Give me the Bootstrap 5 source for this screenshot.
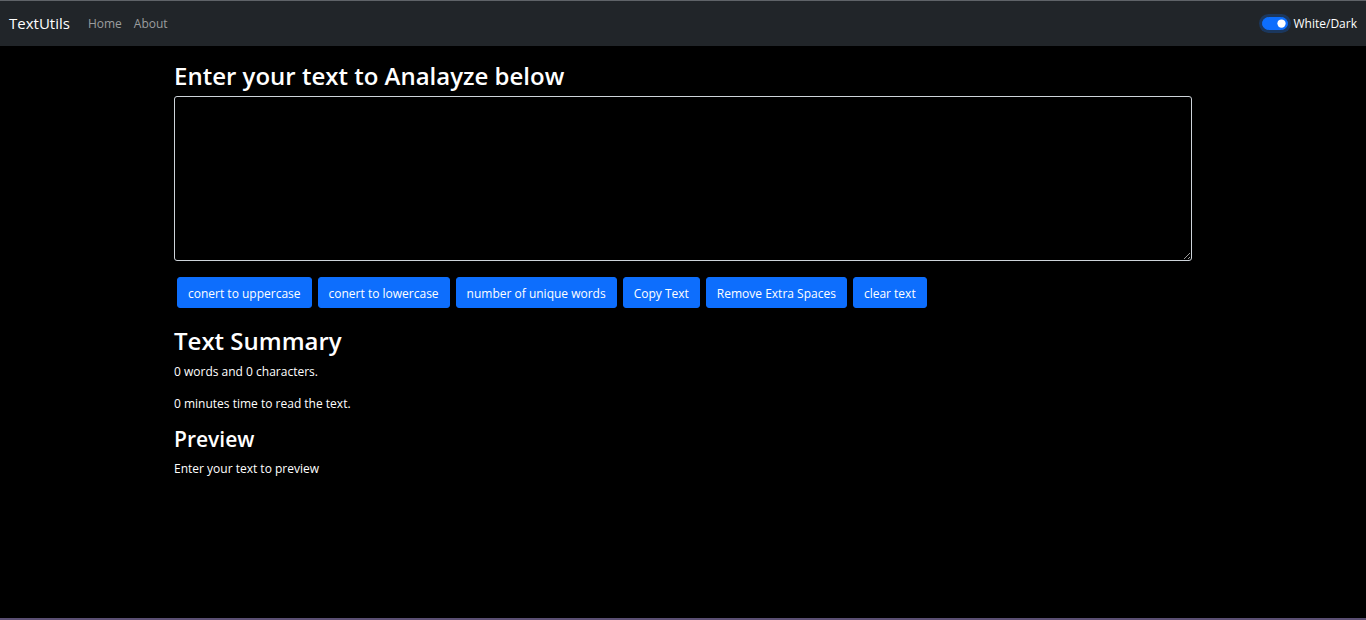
<!DOCTYPE html>
<html lang="en">
<head>
<meta charset="utf-8">
<meta name="viewport" content="width=device-width, initial-scale=1">
<title>TextUtils</title>
<link href="https://cdn.jsdelivr.net/npm/bootstrap@5.3.0/dist/css/bootstrap.min.css" rel="stylesheet">
<style>
  body { font-family: "Open Sans", "Noto Sans", sans-serif; font-size: 12px; line-height: 19px; border-top: 1px solid #5f6368; border-bottom: 2px solid #5b4f73; }
  .topbar { min-height: 45px; }
  .topbar .container-fluid { padding: 0 9px; }
  .topbar .navbar-brand { font-size: 15px; line-height: 22px; margin-right: 12px; padding: 0 0 2px; }
  .topbar .navbar-nav .nav-link { padding: 6px; color: #9b9d9e; }
  .topbar .form-switch { gap: 6px; }
  .topbar .form-check-input { width: 26px; height: 13px; margin: 0; float: none; }
  .topbar .form-check-input:checked { box-shadow: 0 0 0 3px rgba(13, 110, 253, .25); }
  .page { max-width: 1018px; padding-top: 14px; }
  .page h1, .page h2 { font-size: 24px; line-height: 31px; font-weight: 600; }
  .page h1 { margin-bottom: 5px; }
  .page h2 { margin-bottom: 6px; }
  .page h3 { font-size: 21px; line-height: 27px; font-weight: 600; margin-bottom: 6px; }
  .page p { margin-bottom: 13px; }
  .page textarea { height: 165px; border-color: #ced4da; border-radius: 3px; background: #000; color: #fff; font-size: 12px; }
  .page textarea:focus { background: #000; color: #fff; }
  .tools { gap: 6px; margin: 16px 3px 17px; }
  .tools .btn { font-size: 12px; line-height: 19px; padding: 6px 10px 4px; border-radius: 3px; }
</style>
</head>
<body class="bg-black text-white min-vh-100">
<nav class="topbar navbar navbar-expand navbar-dark bg-dark py-0">
  <div class="container-fluid">
    <a class="navbar-brand" href="#">TextUtils</a>
    <ul class="navbar-nav me-auto">
      <li class="nav-item"><a class="nav-link" href="#">Home</a></li>
      <li class="nav-item"><a class="nav-link" href="#">About</a></li>
    </ul>
    <div class="form-switch d-flex align-items-center p-0">
      <input class="form-check-input" type="checkbox" role="switch" id="mode" checked>
      <label for="mode">White/Dark</label>
    </div>
  </div>
</nav>
<main class="page container-fluid px-0">
  <h1><label for="text">Enter your text to Analayze below</label></h1>
  <textarea class="form-control" id="text"></textarea>
  <div class="tools d-flex flex-wrap">
    <button type="button" class="btn btn-primary">conert to uppercase</button>
    <button type="button" class="btn btn-primary">conert to lowercase</button>
    <button type="button" class="btn btn-primary">number of unique words</button>
    <button type="button" class="btn btn-primary">Copy Text</button>
    <button type="button" class="btn btn-primary">Remove Extra Spaces</button>
    <button type="button" class="btn btn-primary">clear text</button>
  </div>
  <h2>Text Summary</h2>
  <p>0 words and 0 characters.</p>
  <p>0 minutes time to read the text.</p>
  <h3>Preview</h3>
  <p>Enter your text to preview</p>
</main>
<script src="https://cdn.jsdelivr.net/npm/bootstrap@5.3.0/dist/js/bootstrap.bundle.min.js"></script>
</body>
</html>
